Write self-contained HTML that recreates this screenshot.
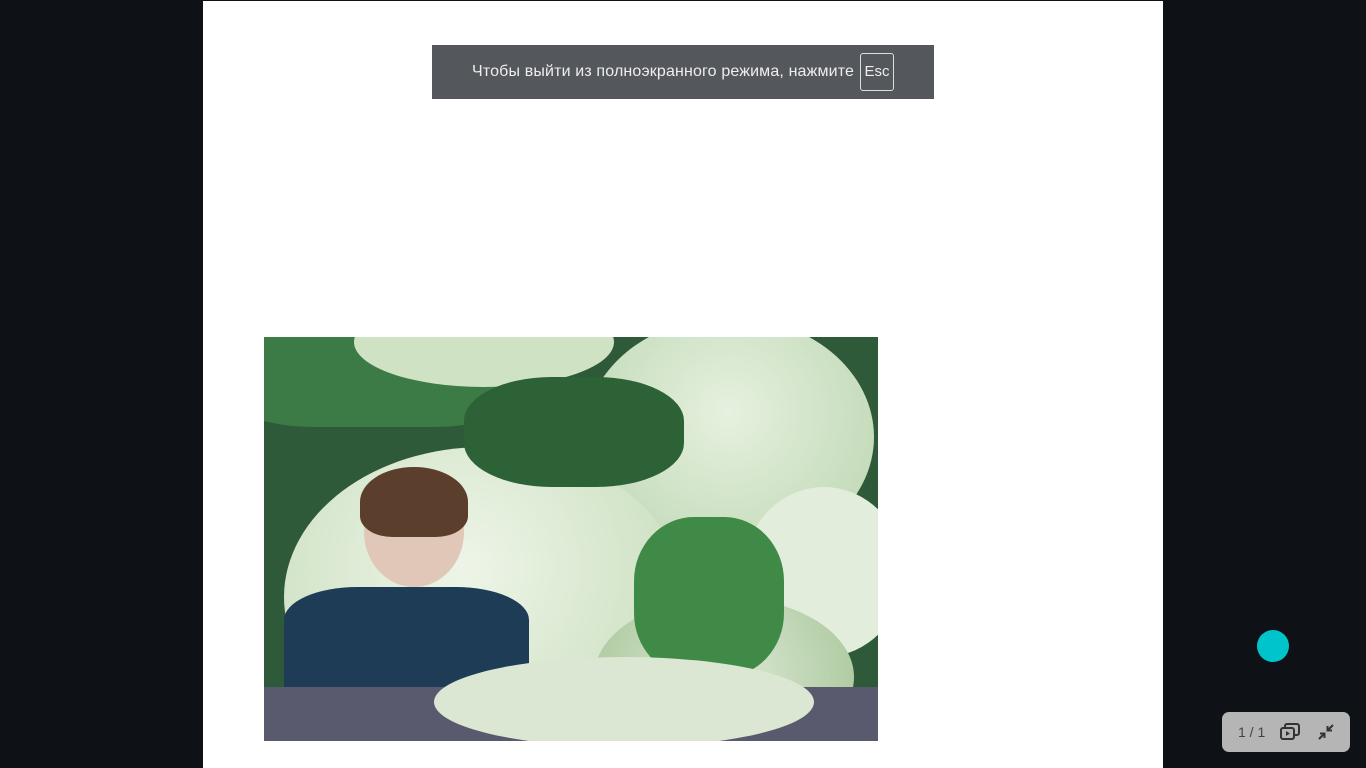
<!DOCTYPE html>
<html><head><meta charset="utf-8"><style>
html,body{margin:0;padding:0;width:1366px;height:768px;overflow:hidden;background:#0e1216;font-family:"Liberation Sans",sans-serif}
.page{position:absolute;left:203px;top:1px;width:960px;height:767px;background:#fff}
.toast{position:absolute;left:432px;top:45px;width:502px;height:54px;background:#54575b;color:#eee;font-size:16px}
.toast span{position:absolute;left:40px;top:18px;letter-spacing:0.15px}
.esc{position:absolute;left:428px;top:8px;width:34px;height:38px;border:1px solid #ddd;border-radius:3px;box-sizing:border-box;text-align:center;line-height:36px;font-size:15px}
.img{position:absolute;left:264px;top:337px;width:614px;height:404px;overflow:hidden;background:#2f5a3a}
.img div{position:absolute;border-radius:50%}
.ctrl{position:absolute;left:1222px;top:712px;width:128px;height:40px;background:#b5b5b5;border-radius:7px}
.dot{position:absolute;left:1257px;top:630px;width:32px;height:32px;border-radius:50%;background:#00c4cc}
</style></head><body>
<div class="page"></div>
<div class="toast"><span>Чтобы выйти из полноэкранного режима, нажмите</span><div class="esc">Esc</div></div>
<div class="img">
 <div style="left:-40px;top:-30px;width:300px;height:120px;background:#3c7b45;border-radius:30%"></div>
 <div style="left:90px;top:-40px;width:260px;height:90px;background:#cfe3c4"></div>
 <div style="left:320px;top:-20px;width:290px;height:240px;background:radial-gradient(circle at 50% 40%,#e6f1df,#b9d4ae)"></div>
 <div style="left:20px;top:110px;width:400px;height:300px;background:radial-gradient(circle at 45% 40%,#eef5e8,#c4dbb8)"></div>
 <div style="left:480px;top:150px;width:160px;height:170px;background:#e2eedb"></div>
 <div style="left:330px;top:260px;width:260px;height:160px;background:radial-gradient(circle,#dde9d5,#a9c79b)"></div>
 <div style="left:200px;top:40px;width:220px;height:110px;background:#2d6236;border-radius:40%"></div>
 <div style="left:370px;top:180px;width:150px;height:160px;background:#3f8a47;border-radius:40%"></div>
 <div style="left:100px;top:140px;width:100px;height:110px;background:#e0c7b8"></div>
 <div style="left:96px;top:130px;width:108px;height:70px;background:#5b3f2c;border-radius:50% 50% 30% 30%"></div>
 <div style="left:20px;top:250px;width:245px;height:110px;background:#1e3c55;border-radius:30% 30% 0 0"></div>
 <div style="left:0;top:350px;width:614px;height:60px;background:#5a5a6e;border-radius:0"></div>
 <div style="left:170px;top:320px;width:380px;height:90px;background:#dbe7d2"></div>
</div>
<div class="dot"></div>
<div class="ctrl">
 <span style="position:absolute;left:16px;top:12px;font-size:14px;color:#444">1 / 1</span>
 <svg style="position:absolute;left:57px;top:10px" width="22" height="20" viewBox="0 0 22 20" fill="none" stroke="#333" stroke-width="2"><rect x="2" y="6" width="13" height="11" rx="2"/><path d="M6 6V4a2 2 0 0 1 2-2h10a2 2 0 0 1 2 2v7a2 2 0 0 1-2 2h-3"/><path d="M7 9v5l4-2.5z" fill="#333" stroke="none"/></svg>
 <svg style="position:absolute;left:94px;top:10px" width="20" height="20" viewBox="0 0 20 20" fill="none" stroke="#333" stroke-width="2"><path d="M3 17l5-5M4 11.5h4.5V16M17 3l-5 5M16 8.5h-4.5V4"/></svg>
</div>
</body></html>
